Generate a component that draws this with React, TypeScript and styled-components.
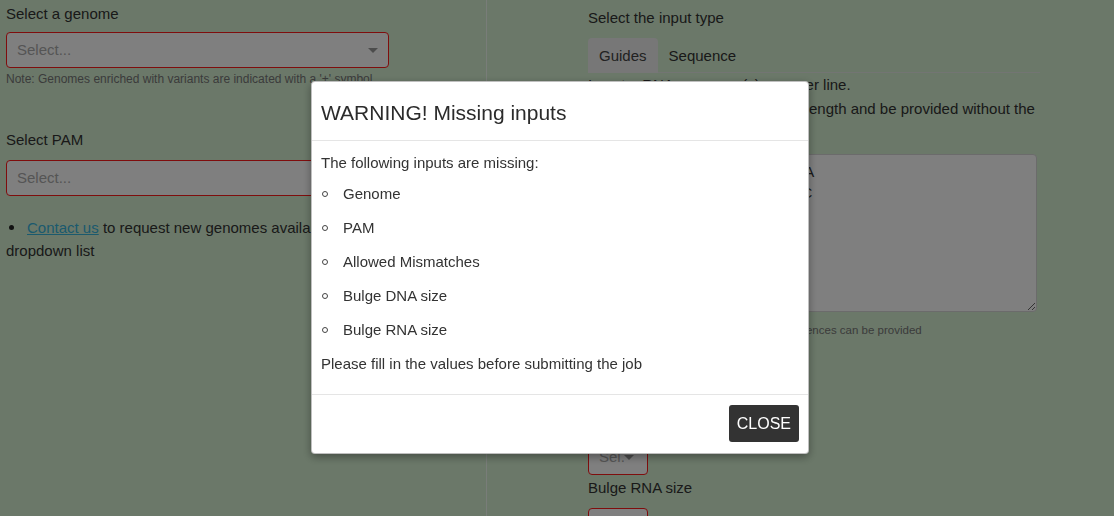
import React from "react";
import styled, { createGlobalStyle } from "styled-components";

const Global = createGlobalStyle`
  html, body {
    margin: 0;
    padding: 0;
    height: 100%;
    overflow: hidden;
  }
  body {
    background: #d6f0d2;
    color: #333;
    font-family: "Liberation Sans", Arial, Helvetica, sans-serif;
    font-size: 15px;
    line-height: 21px;
  }
  *, *::before, *::after { box-sizing: border-box; }
`;

const Page = styled.div`
  display: grid;
  grid-template-columns: 486px 1fr;
  height: 516px;
`;

const LeftCol = styled.div`
  padding: 3px 0 0 6px;
  display: flex;
  flex-direction: column;
`;

const RightCol = styled.div`
  border-left: 1px solid #f2faf2;
  padding: 7px 0 0 101px;
  display: flex;
  flex-direction: column;
`;

const Label = styled.div<{ $mb?: number; $mt?: number }>`
  font-size: 15px;
  line-height: 21px;
  color: #333;
  margin-top: ${(p) => p.$mt ?? 0}px;
  margin-bottom: ${(p) => p.$mb ?? 8}px;
`;

const SelectBox = styled.div<{ $w: number; $invalid?: boolean; $mb?: number; $padR?: number }>`
  width: ${(p) => p.$w}px;
  height: 36px;
  flex: none;
  display: flex;
  align-items: center;
  background: #fff;
  border: 1px solid ${(p) => (p.$invalid ? "#ff1a1a" : "#ccc")};
  border-radius: 4px;
  padding: 0 ${(p) => p.$padR ?? 10}px 0 10px;
  margin-bottom: ${(p) => p.$mb ?? 0}px;
`;

const Placeholder = styled.span`
  flex: 1;
  min-width: 0;
  overflow: hidden;
  white-space: nowrap;
  color: #aaa;
  font-size: 15px;
  line-height: 34px;
`;

const Arrow = styled.span`
  flex: none;
  width: 0;
  height: 0;
  border-left: 5px solid transparent;
  border-right: 5px solid transparent;
  border-top: 5px solid #999;
`;

const Note = styled.div<{ $mt?: number; $mb?: number; $size?: number }>`
  font-size: ${(p) => p.$size ?? 12}px;
  line-height: 15px;
  color: #777;
  white-space: nowrap;
  margin-top: ${(p) => p.$mt ?? 0}px;
  margin-bottom: ${(p) => p.$mb ?? 0}px;
`;

const BulletLine = styled.div`
  width: 383px;
  margin-top: 20px;
  font-size: 15px;
  line-height: 23px;
`;

const Bullet = styled.span`
  display: inline-block;
  width: 21px;
  &::before {
    content: "";
    display: inline-block;
    width: 5px;
    height: 5px;
    border-radius: 50%;
    background: #222;
    margin-left: 3px;
    vertical-align: 3px;
  }
`;

const Link = styled.a`
  color: #36b4dc;
  text-decoration: underline;
`;

const TabList = styled.div`
  width: 452px;
  display: flex;
  align-items: flex-end;
  border-bottom: 1px solid #e6ebe6;
`;

const Tab = styled.div<{ $active?: boolean }>`
  padding: 6px 11px;
  line-height: 23px;
  font-size: 15px;
  margin-bottom: -1px;
  border-radius: 4px 4px 0 0;
  background: ${(p) => (p.$active ? "#eee" : "transparent")};
  color: ${(p) => (p.$active ? "#444" : "#333")};
`;

const Instructions = styled.div`
  width: 452px;
  font-size: 15px;
  line-height: 24px;
  margin-bottom: 9px;
`;

const TextArea = styled.textarea`
  width: 449px;
  height: 158px;
  resize: vertical;
  background: #fff;
  border: 1px solid #d6d6d6;
  border-radius: 4px;
  padding: 6px 12px;
  font-family: "Liberation Sans", Arial, Helvetica, sans-serif;
  font-size: 15px;
  line-height: 21px;
  color: #333;
  outline: none;
  display: block;
`;

const Overlay = styled.div`
  position: fixed;
  inset: 0;
  background: rgba(0, 0, 0, 0.5);
  padding: 81px 0 0 311px;
`;

const Modal = styled.div`
  width: 498px;
  background: #fff;
  border: 1px solid rgba(0, 0, 0, 0.25);
  border-radius: 4px;
  box-shadow: 0 3px 9px rgba(0, 0, 0, 0.35);
  color: #333;
`;

const ModalHeader = styled.div`
  padding: 15px 9px 11px;
  border-bottom: 1px solid #e5e5e5;
`;

const Title = styled.h4`
  margin: 0;
  font-size: 21px;
  line-height: 32px;
  font-weight: normal;
  color: #2b2b2b;
`;

const ModalBody = styled.div`
  padding: 11px 9px 20px;
  font-size: 15px;
  line-height: 21px;
`;

const Para = styled.p<{ $mb?: number }>`
  margin: 0 0 ${(p) => p.$mb ?? 0}px;
`;

const Missing = styled.ul`
  list-style: none;
  margin: 0 0 7px;
  padding: 0;
`;

const MissingItem = styled.li`
  display: flex;
  align-items: center;
  height: 34px;
  &::before {
    content: "";
    flex: none;
    width: 6px;
    height: 6px;
    border: 1px solid #444;
    border-radius: 50%;
    margin: 1px 15px 0 1px;
  }
`;

const ModalFooter = styled.div`
  border-top: 1px solid #e5e5e5;
  padding: 10px 9px 11px 9px;
  display: flex;
  justify-content: flex-end;
`;

const CloseButton = styled.button`
  height: 37px;
  padding: 0 8px;
  background: #333;
  color: #fff;
  border: none;
  border-radius: 3px;
  font-family: "Liberation Sans", Arial, Helvetica, sans-serif;
  font-size: 16px;
  text-transform: uppercase;
  cursor: pointer;
`;

const missing = ["Genome", "PAM", "Allowed Mismatches", "Bulge DNA size", "Bulge RNA size"];

export default function App() {
  return (
    <>
      <Global />
      <Page>
        <LeftCol>
          <Label $mb={8}>Select a genome</Label>
          <SelectBox $w={383} $invalid>
            <Placeholder>Select...</Placeholder>
            <Arrow />
          </SelectBox>
          <Note $mt={4}>Note: Genomes enriched with variants are indicated with a '+' symbol</Note>
          <Label $mt={42} $mb={10}>Select PAM</Label>
          <SelectBox $w={383} $invalid>
            <Placeholder>Select...</Placeholder>
            <Arrow />
          </SelectBox>
          <BulletLine>
            <Bullet />
            <Link href="#">Contact us</Link> to request new genomes available in the dropdown list
          </BulletLine>
        </LeftCol>
        <RightCol>
          <Label $mb={10}>Select the input type</Label>
          <TabList>
            <Tab $active>Guides</Tab>
            <Tab>Sequence</Tab>
          </TabList>
          <Instructions>
            Insert crRNA sequence(s), one per line.
            <br />
            The guides must have the same length and be provided without the PAM sequence
          </Instructions>
          <TextArea
            defaultValue={"GAGTCCGAGCAGAAGAAGAA\nCCATCGGTGGCCGTTTGCCC"}
            spellCheck={false}
          />
          <Note $size={11.5} $mt={11} $mb={1}>
            Note: a maximum of 1000 guide RNA sequences can be provided
          </Note>
          <Label $mb={10}>Allowed mismatches</Label>
          <SelectBox $w={60} $invalid $mb={2} $padR={13}>
            <Placeholder>Sel..</Placeholder>
            <Arrow />
          </SelectBox>
          <Label $mb={10}>Bulge DNA size</Label>
          <SelectBox $w={60} $invalid $mb={2} $padR={13}>
            <Placeholder>Sel..</Placeholder>
            <Arrow />
          </SelectBox>
          <Label $mb={10}>Bulge RNA size</Label>
          <SelectBox $w={60} $invalid $padR={13}>
            <Placeholder>Sel..</Placeholder>
            <Arrow />
          </SelectBox>
        </RightCol>
      </Page>
      <Overlay>
        <Modal role="dialog">
          <ModalHeader>
            <Title>WARNING! Missing inputs</Title>
          </ModalHeader>
          <ModalBody>
            <Para $mb={3}>The following inputs are missing:</Para>
            <Missing>
              {missing.map((m) => (
                <MissingItem key={m}>{m}</MissingItem>
              ))}
            </Missing>
            <Para>Please fill in the values before submitting the job</Para>
          </ModalBody>
          <ModalFooter>
            <CloseButton>Close</CloseButton>
          </ModalFooter>
        </Modal>
      </Overlay>
    </>
  );
}
